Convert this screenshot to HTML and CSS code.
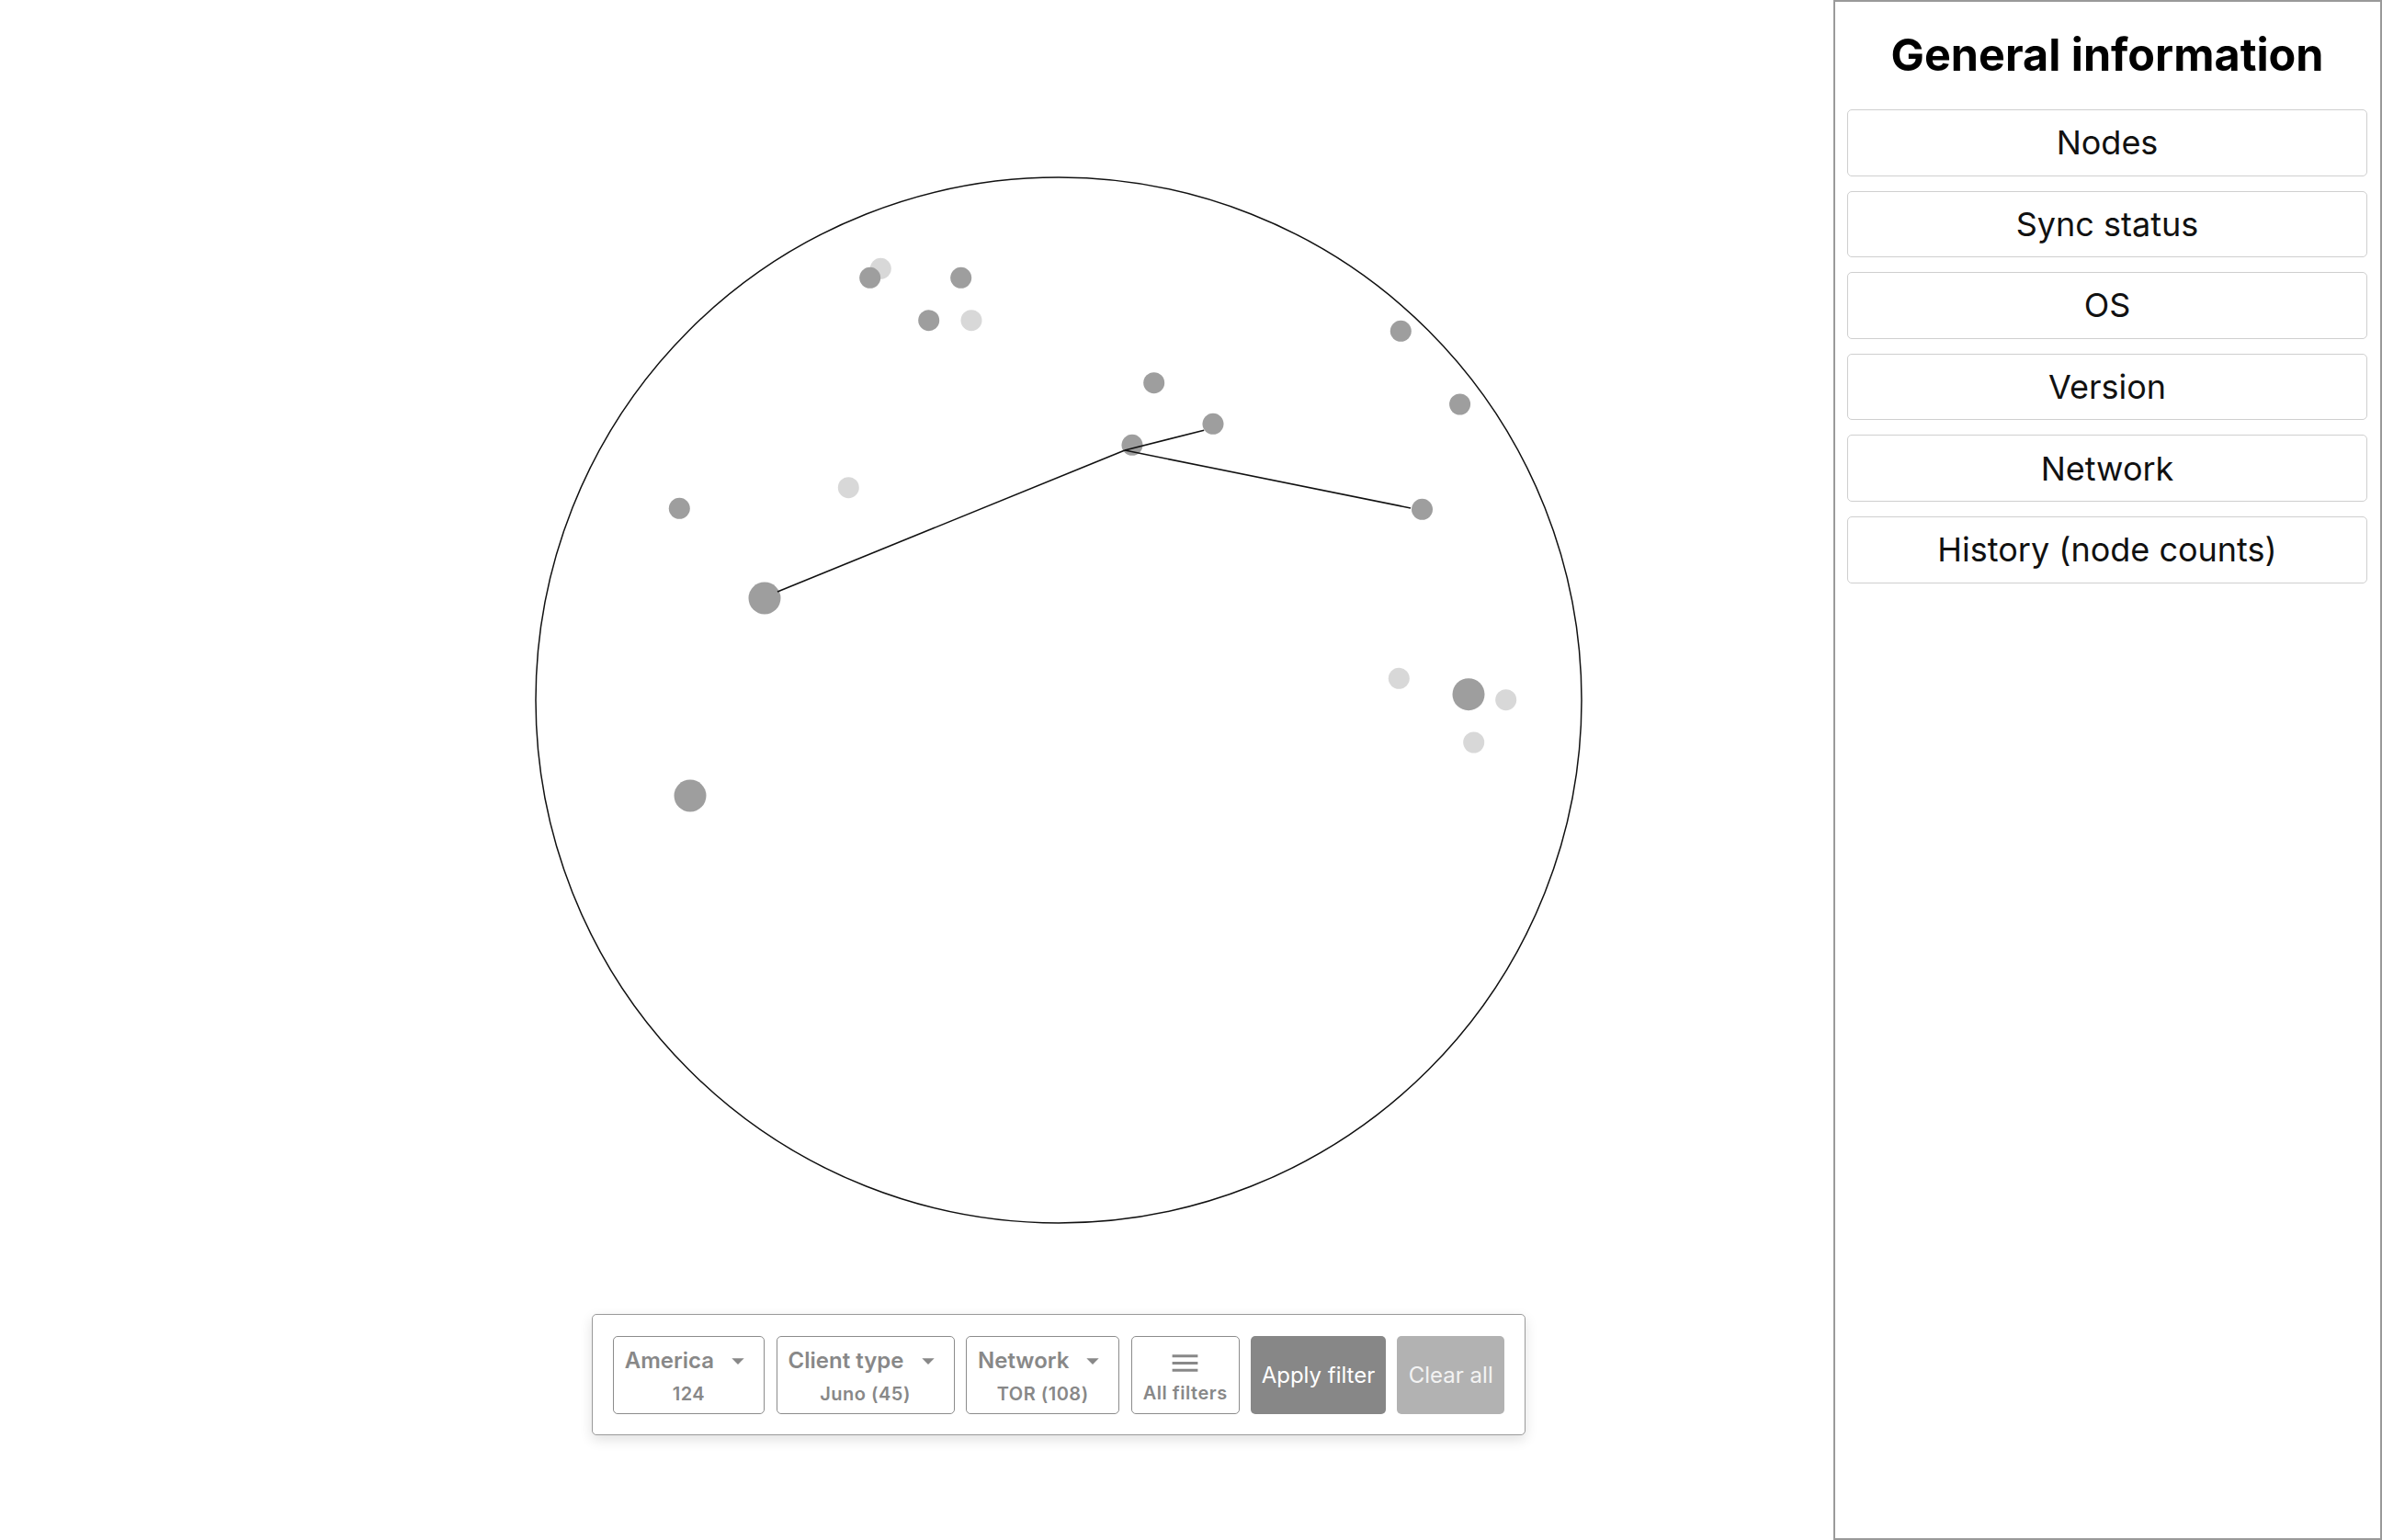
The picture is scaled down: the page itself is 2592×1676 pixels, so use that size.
FILE: index.html
```html
<!DOCTYPE html>
<html lang="en">
<head>
<meta charset="utf-8">
<title>Node map</title>
<link rel="stylesheet" href="styles.css">
</head>
<body>
<div class="app">
  <main class="main">
    <div class="map-column">
      <svg class="map" width="1140" height="1140" viewBox="0 0 1140 1140" xmlns="http://www.w3.org/2000/svg">
        <circle cx="570" cy="570" r="569" fill="none" stroke="#111" stroke-width="1.5"/>
        <g class="dots">
          <circle cx="376.3" cy="100.3" r="11.5" fill="#d8d8d8"/>
          <circle cx="364.7" cy="110.3" r="11.5" fill="#9e9e9e"/>
          <circle cx="463.7" cy="110.3" r="11.5" fill="#9e9e9e"/>
          <circle cx="428.7" cy="156.7" r="11.5" fill="#9e9e9e"/>
          <circle cx="475" cy="156.7" r="11.5" fill="#d8d8d8"/>
          <circle cx="942.3" cy="168.3" r="11.5" fill="#9e9e9e"/>
          <circle cx="673.7" cy="224.7" r="11.5" fill="#9e9e9e"/>
          <circle cx="1006.6" cy="248" r="11.5" fill="#9e9e9e"/>
          <circle cx="738" cy="269.3" r="11.5" fill="#9e9e9e"/>
          <circle cx="650" cy="292.3" r="11.5" fill="#9e9e9e"/>
          <circle cx="965.5" cy="362.3" r="11.5" fill="#9e9e9e"/>
          <circle cx="157.3" cy="361.3" r="11.5" fill="#9e9e9e"/>
          <circle cx="341.3" cy="338.7" r="11.5" fill="#d8d8d8"/>
          <circle cx="250" cy="459" r="17.5" fill="#9e9e9e"/>
          <circle cx="940.3" cy="546.3" r="11.5" fill="#d8d8d8"/>
          <circle cx="1016" cy="563.7" r="17.5" fill="#9e9e9e"/>
          <circle cx="1056.7" cy="569.7" r="11.5" fill="#d8d8d8"/>
          <circle cx="1021.7" cy="616" r="11.5" fill="#d8d8d8"/>
          <circle cx="169" cy="674" r="17.5" fill="#9e9e9e"/>
        </g>
        <g class="links" stroke="#111" stroke-width="1.6" fill="none">
          <line x1="642" y1="298" x2="264" y2="452"/>
          <line x1="642" y1="298" x2="728.2" y2="276.3"/>
          <line x1="642" y1="298" x2="953" y2="361"/>
        </g>
      </svg>

      <div class="filter-bar">
        <button class="filter-btn dropdown">
          <span class="filter-head">America<svg class="caret" viewBox="0 0 24 24"><path d="M7 10l5 5 5-5z"/></svg></span>
          <span class="filter-sub">124</span>
        </button>
        <button class="filter-btn dropdown">
          <span class="filter-head">Client type<svg class="caret" viewBox="0 0 24 24"><path d="M7 10l5 5 5-5z"/></svg></span>
          <span class="filter-sub">Juno (45)</span>
        </button>
        <button class="filter-btn dropdown">
          <span class="filter-head">Network<svg class="caret" viewBox="0 0 24 24"><path d="M7 10l5 5 5-5z"/></svg></span>
          <span class="filter-sub">TOR (108)</span>
        </button>
        <button class="filter-btn all-filters">
          <svg class="menu-icon" viewBox="0 0 24 24"><path d="M3 18h18v-2H3v2zm0-5h18v-2H3v2zm0-7v2h18V6H3z"/></svg>
          <span class="filter-sub">All filters</span>
        </button>
        <button class="action-btn apply">Apply filter</button>
        <button class="action-btn clear">Clear all</button>
      </div>
    </div>
  </main>

  <aside class="sidebar">
    <h1 class="sidebar-title">General information</h1>
    <nav class="sidebar-list">
      <button class="side-btn">Nodes</button>
      <button class="side-btn">Sync status</button>
      <button class="side-btn">OS</button>
      <button class="side-btn">Version</button>
      <button class="side-btn">Network</button>
      <button class="side-btn">History (node counts)</button>
    </nav>
  </aside>
</div>
</body>
</html>
```

FILE: styles.css
```css
* {
  box-sizing: border-box;
}

html, body {
  margin: 0;
  padding: 0;
  background: #ffffff;
  font-family: Inter, "Noto Sans", "Liberation Sans", sans-serif;
  color: #111;
}

.app {
  display: flex;
  width: 100%;
  height: 100vh;
  overflow: hidden;
}

.main {
  flex: 1 1 auto;
  min-width: 0;
  padding: 192px 0 0 582px;
}

.map-column {
  width: 1140px;
  display: flex;
  flex-direction: column;
  align-items: center;
}

.map {
  display: block;
  flex: none;
}

.filter-bar {
  margin-top: 98px;
  display: flex;
  gap: 12.5px;
  padding: 22.5px 22px;
  border: 1px solid #9a9a9a;
  border-radius: 5px;
  background: #fff;
  box-shadow: 0 5px 14px rgba(0, 0, 0, 0.12);
}

.filter-btn {
  height: 85px;
  padding: 0 12px;
  border: 1px solid #8c8c8c;
  border-radius: 5px;
  background: #fff;
  font-family: inherit;
  color: #888;
  display: flex;
  flex-direction: column;
  align-items: center;
  justify-content: center;
  cursor: pointer;
}

.filter-head {
  display: flex;
  align-items: center;
  height: 32px;
  font-size: 24px;
  font-weight: 600;
  line-height: 32px;
  white-space: nowrap;
}

.caret {
  width: 32px;
  height: 32px;
  margin-left: 10px;
  fill: #888;
}

.filter-sub {
  display: block;
  font-size: 20px;
  font-weight: 600;
  line-height: 22px;
  letter-spacing: 0.5px;
  white-space: nowrap;
}

.dropdown .filter-sub {
  margin-top: 9px;
}

.menu-icon {
  width: 37px;
  height: 37px;
  fill: #888;
}

.all-filters .filter-sub {
  margin-top: 3px;
}

.action-btn {
  height: 85px;
  border: none;
  border-radius: 5px;
  font-family: inherit;
  font-size: 24px;
  font-weight: 400;
  white-space: nowrap;
  cursor: pointer;
}

.apply {
  padding: 0 11.5px;
  background: #878787;
  color: #ffffff;
}

.clear {
  padding: 0 12.5px;
  background: #b2b2b2;
  color: #f3f3f3;
}

.sidebar {
  flex: 0 0 597px;
  height: 100%;
  border: 2px solid #9a9a9a;
  padding: 28px 14px 0 13px;
  background: #fff;
}

.sidebar-title {
  margin: 0;
  text-align: center;
  font-size: 48.5px;
  font-weight: 700;
  line-height: 60px;
  color: #000;
  white-space: nowrap;
}

.sidebar-list {
  margin-top: 29px;
  display: flex;
  flex-direction: column;
  gap: 16px;
}

.side-btn {
  height: 72.6px;
  width: 100%;
  border: 1px solid #cfcfcf;
  border-radius: 5px;
  background: #fff;
  font-family: inherit;
  font-size: 36px;
  font-weight: 400;
  color: #111;
  display: flex;
  align-items: center;
  justify-content: center;
  cursor: pointer;
}
```
